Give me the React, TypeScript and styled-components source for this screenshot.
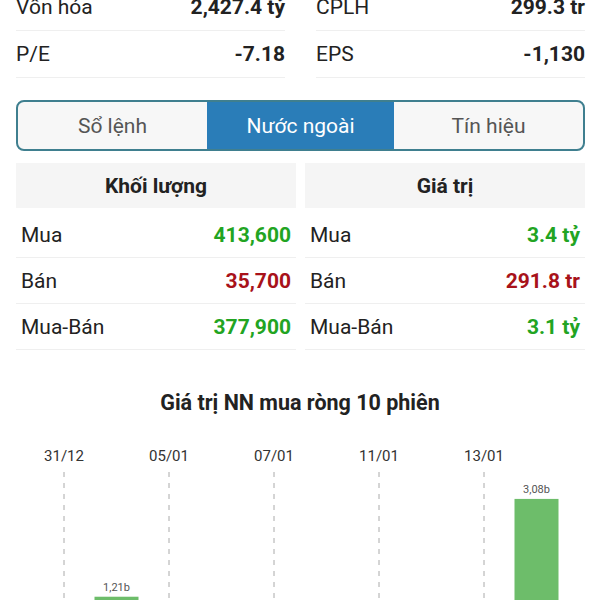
import React from "react";
import styled, { createGlobalStyle } from "styled-components";

const GlobalStyle = createGlobalStyle`
  html, body {
    margin: 0;
    padding: 0;
    background: #fff;
    overflow: hidden;
  }
  body {
    font-family: Roboto, "Noto Sans", "Liberation Sans", sans-serif;
    color: #222;
  }
`;

const GREEN = "#22a422";
const RED = "#a8121a";

const stats = [
  [
    { label: "Vốn hóa", value: "2,427.4 tỷ" },
    { label: "P/E", value: "-7.18" },
  ],
  [
    { label: "CPLH", value: "299.3 tr" },
    { label: "EPS", value: "-1,130" },
  ],
];

const tabs = ["Sổ lệnh", "Nước ngoài", "Tín hiệu"];

type Tone = "up" | "down";

const tables: { title: string; rows: { label: string; value: string; tone: Tone }[] }[] = [
  {
    title: "Khối lượng",
    rows: [
      { label: "Mua", value: "413,600", tone: "up" },
      { label: "Bán", value: "35,700", tone: "down" },
      { label: "Mua-Bán", value: "377,900", tone: "up" },
    ],
  },
  {
    title: "Giá trị",
    rows: [
      { label: "Mua", value: "3.4 tỷ", tone: "up" },
      { label: "Bán", value: "291.8 tr", tone: "down" },
      { label: "Mua-Bán", value: "3.1 tỷ", tone: "up" },
    ],
  },
];

// net foreign buy value per session, in billions
const sessions = [
  { date: "31/12", value: 0.32 },
  { date: "04/01", value: 1.21 },
  { date: "05/01", value: 0.25 },
  { date: "06/01", value: 0.41 },
  { date: "07/01", value: 0.18 },
  { date: "08/01", value: 0.36 },
  { date: "11/01", value: 0.27 },
  { date: "12/01", value: 0.44 },
  { date: "13/01", value: 0.3 },
  { date: "14/01", value: 3.08 },
];

export default function App() {
  return (
    <>
      <GlobalStyle />
      <Page>
        <StatsGrid>
          {stats.map((col, i) => (
            <div key={i}>
              {col.map((s) => (
                <StatRow key={s.label}>
                  <Label>{s.label}</Label>
                  <StatValue>{s.value}</StatValue>
                </StatRow>
              ))}
            </div>
          ))}
        </StatsGrid>

        <Tabs>
          {tabs.map((t, i) => (
            <Tab key={t} $active={i === 1}>
              {t}
            </Tab>
          ))}
        </Tabs>

        <Tables>
          {tables.map((tb) => (
            <div key={tb.title}>
              <TableHead>{tb.title}</TableHead>
              <TableBody>
                {tb.rows.map((r) => (
                  <TableRow key={r.label}>
                    <Label>{r.label}</Label>
                    <ToneValue $tone={r.tone}>{r.value}</ToneValue>
                  </TableRow>
                ))}
              </TableBody>
            </div>
          ))}
        </Tables>
      </Page>

      <ChartSection>
        <ChartTitle>Giá trị NN mua ròng 10 phiên</ChartTitle>
        <NetBuyChart />
      </ChartSection>
    </>
  );
}

const NetBuyChart = () => {
  const x0 = 64;
  const step = 52.5;
  const base = 240;
  const scale = 52.3;
  const barW = 44;

  return (
    <ChartSvg width={600} height={260} viewBox="0 0 600 260">
      {sessions.map((s, i) => {
        const cx = x0 + step * i;
        if (i % 2 !== 0) return null;
        return (
          <g key={s.date}>
            <text x={cx} y={41} textAnchor="middle" fontSize={15} fill="#333">
              {s.date}
            </text>
            <line
              x1={cx}
              x2={cx}
              y1={52}
              y2={260}
              stroke="#aaa"
              strokeWidth={1}
              strokeDasharray="5 6"
            />
          </g>
        );
      })}
      {sessions.map((s, i) => {
        const cx = x0 + step * i;
        const h = s.value * scale;
        return (
          <g key={"b" + s.date}>
            <rect x={cx - barW / 2} y={base - h} width={barW} height={h} fill="#6dbd6a" />
            <text
              x={cx}
              y={base - h - 6}
              textAnchor="middle"
              fontSize={11}
              fill="#555"
            >
              {s.value.toFixed(2).replace(".", ",")}b
            </text>
          </g>
        );
      })}
    </ChartSvg>
  );
};

const Page = styled.div`
  padding: 0 15px 0 16px;
  margin-top: -16px;
`;

const StatsGrid = styled.div`
  display: grid;
  grid-template-columns: 1fr 1fr;
  column-gap: 31px;
`;

const StatRow = styled.div`
  height: 46px;
  display: flex;
  align-items: center;
  justify-content: space-between;
  border-bottom: 1px solid #efefef;
`;

const Label = styled.span`
  font-size: 21px;
  color: #222;
`;

const StatValue = styled.span`
  font-size: 21px;
  font-weight: 700;
  color: #222;
`;

const Tabs = styled.div`
  margin-top: 22px;
  height: 51px;
  box-sizing: border-box;
  display: grid;
  grid-template-columns: 189px 1fr 189px;
  border: 2px solid #3f7f8f;
  border-radius: 8px;
  overflow: hidden;
  background: #f7f7f7;
`;

const Tab = styled.div<{ $active?: boolean }>`
  display: flex;
  align-items: center;
  justify-content: center;
  font-size: 21px;
  color: ${(p) => (p.$active ? "#fff" : "#555")};
  background: ${(p) => (p.$active ? "#2a7db8" : "transparent")};
`;

const Tables = styled.div`
  margin-top: 12px;
  display: grid;
  grid-template-columns: 280px 280px;
  column-gap: 9px;
`;

const TableHead = styled.div`
  height: 45px;
  display: flex;
  align-items: center;
  justify-content: center;
  background: #f5f5f5;
  font-size: 21px;
  font-weight: 700;
  color: #222;
`;

const TableBody = styled.div`
  margin-top: 4px;
`;

const TableRow = styled.div`
  height: 46px;
  box-sizing: border-box;
  padding: 0 5px;
  display: flex;
  align-items: center;
  justify-content: space-between;
  border-bottom: 1px solid #efefef;
`;

const ToneValue = styled.span<{ $tone: Tone }>`
  font-size: 21px;
  font-weight: 700;
  color: ${(p) => (p.$tone === "up" ? GREEN : RED)};
`;

const ChartSection = styled.section`
  margin-top: 41px;
`;

const ChartTitle = styled.h2`
  margin: 0;
  text-align: center;
  font-size: 21.5px;
  line-height: 24px;
  font-weight: 700;
  color: #222;
`;

const ChartSvg = styled.svg`
  display: block;
  margin-top: 5px;
  font-family: Roboto, "Noto Sans", sans-serif;
`;
